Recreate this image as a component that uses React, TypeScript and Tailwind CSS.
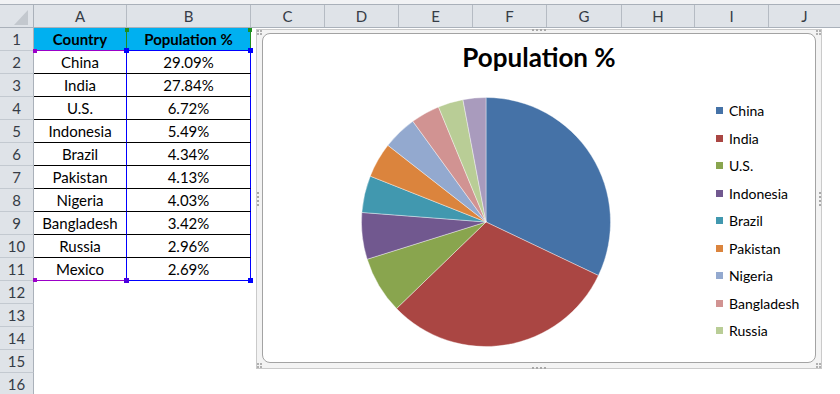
const rows: [string, string][] = [
  ["China", "29.09%"],
  ["India", "27.84%"],
  ["U.S.", "6.72%"],
  ["Indonesia", "5.49%"],
  ["Brazil", "4.34%"],
  ["Pakistan", "4.13%"],
  ["Nigeria", "4.03%"],
  ["Bangladesh", "3.42%"],
  ["Russia", "2.96%"],
  ["Mexico", "2.69%"],
];

const colors = [
  "#4572a7",
  "#aa4643",
  "#89a54e",
  "#71588f",
  "#4198af",
  "#db843d",
  "#93a9cf",
  "#d19392",
  "#b9cd96",
  "#a99bbd",
];

const cols = [
  { label: "A", w: "w-[93px] border-r" },
  { label: "B", w: "w-[124px] border-r" },
  { label: "C", w: "w-[74px] border-r" },
  { label: "D", w: "w-[74px] border-r" },
  { label: "E", w: "w-[74px] border-r" },
  { label: "F", w: "w-[74px] border-r" },
  { label: "G", w: "w-[75px] border-r" },
  { label: "H", w: "w-[73px] border-r" },
  { label: "I", w: "w-[74px] border-r" },
  { label: "J", w: "flex-1" },
];

function cellStyle(r: number, col: "A" | "B") {
  if (r === 1)
    return col === "A"
      ? "bg-[#00b0f0] font-bold border-r border-b border-r-[#1f8f1f] border-b-[#9b00c8]"
      : "bg-[#00b0f0] font-bold border-r border-b border-r-[#1f8f1f] border-b-[#0000ff]";
  if (r >= 2 && r <= 10) return "border-r border-b border-r-[#0000ff] border-b-black";
  if (r === 11)
    return col === "A"
      ? "border-r border-b border-r-[#0000ff] border-b-[#9b00c8]"
      : "border-r border-b border-[#0000ff]";
  return "";
}

function cellText(r: number, col: "A" | "B") {
  if (r === 1) return col === "A" ? "Country" : "Population %";
  if (r <= 11) return rows[r - 2][col === "A" ? 0 : 1];
  return "";
}

function Pie() {
  const total = rows.reduce((s, [, v]) => s + parseFloat(v), 0);
  const c = 125;
  const rad = 124.5;
  let a = 0;
  const pt = (deg: number) => {
    const t = (deg * Math.PI) / 180;
    return `${c + rad * Math.sin(t)} ${c - rad * Math.cos(t)}`;
  };
  return (
    <svg width="250" height="250" viewBox="0 0 250 250" className="shrink-0">
      {rows.map(([name, v], i) => {
        const start = a;
        const sweep = (parseFloat(v) / total) * 360;
        a += sweep;
        const large = sweep > 180 ? 1 : 0;
        return (
          <path
            key={name}
            d={`M ${c} ${c} L ${pt(start)} A ${rad} ${rad} 0 ${large} 1 ${pt(a)} Z`}
            fill={colors[i]}
            stroke="#ffffff"
            strokeWidth="0.4"
          />
        );
      })}
    </svg>
  );
}

// little grip dots on the chart frame
function Dots({ vertical = false }: { vertical?: boolean }) {
  return (
    <div className={vertical ? "flex flex-col gap-[2px]" : "flex gap-[2px]"}>
      {[0, 1, 2, 3].map((i) => (
        <span key={i} className="block h-[2px] w-[2px] bg-[#a8a8a8]" />
      ))}
    </div>
  );
}

function Corner() {
  return (
    <div className="grid grid-cols-2 gap-[1px]">
      {[0, 1, 2, 3].map((i) => (
        <span key={i} className="block h-[2px] w-[2px] bg-[#b0b0b0]" />
      ))}
    </div>
  );
}

function Chart() {
  return (
    <div className="absolute left-[256px] top-[29px] h-[340px] w-[566px] border border-[#cacaca] bg-[#f3f3f3] pb-[5px] pl-[5px] pr-[5px] pt-[3px]">
      <div className="absolute inset-0 flex flex-col justify-between">
        <div className="flex items-start justify-between">
          <Corner />
          <div className="-mt-px">
            <Dots />
          </div>
          <Corner />
        </div>
        <div className="flex items-center justify-between">
          <Dots vertical />
          <Dots vertical />
        </div>
        <div className="flex items-end justify-between">
          <Corner />
          <div className="-mb-px">
            <Dots />
          </div>
          <Corner />
        </div>
      </div>

      <div className="relative flex h-full w-full flex-col rounded-[8px] border border-[#a3a3a3] bg-white">
        <div className="flex h-[63px] justify-center pt-[8px] text-[26px] font-bold leading-[30px] text-black">
          Population %
        </div>
        <div className="flex">
          <div className="ml-[98px]">
            <Pie />
          </div>
          <div className="ml-[105px] flex flex-col">
            {rows.slice(0, 9).map(([name], i) => (
              <div key={name} className="flex h-[27.5px] items-center gap-[6px] text-[14px] text-black">
                <span className="block h-[7px] w-[7px]" style={{ backgroundColor: colors[i] }} />
                {name}
              </div>
            ))}
          </div>
        </div>
      </div>
    </div>
  );
}

export default function App() {
  return (
    <div className="relative h-[394px] w-[840px] overflow-hidden bg-white font-[family-name:Lato,sans-serif]">
      <div className="h-[5px] border-b border-[#a9b0b9] bg-[#f1f2f4]" />
      <div className="flex h-[23px] border-b border-[#aab1ba] bg-[#dfe3e8] text-[15px] text-[#363c46]">
        <div className="w-[34px] shrink-0 border-r border-[#aab1ba]">
          <svg width="33" height="22" viewBox="0 0 33 22">
            <polygon points="28,5 28,20 14,20" fill="#c3c8ce" />
          </svg>
        </div>
        {cols.map((c) => (
          <div key={c.label} className={`${c.w} flex shrink-0 items-center justify-center border-[#b5bbc3]`}>
            {c.label}
          </div>
        ))}
      </div>

      {Array.from({ length: 16 }, (_, i) => i + 1).map((r) => (
        <div key={r} className="flex h-[23px] text-[15px] text-black">
          <div className="flex w-[34px] shrink-0 items-center justify-center border-b border-r border-b-[#c3c9d0] border-r-[#aab1ba] bg-[#dfe3e8] text-[#363c46]">
            {r}
          </div>
          <div className={`flex w-[93px] shrink-0 items-center justify-center ${cellStyle(r, "A")}`}>
            {cellText(r, "A")}
          </div>
          <div className={`flex w-[124px] shrink-0 items-center justify-center ${cellStyle(r, "B")}`}>
            {cellText(r, "B")}
          </div>
          <div className="flex-1" />
        </div>
      ))}

      {/* range highlight handles */}
      <span className="absolute left-[125px] top-[28px] h-[4px] w-[4px] bg-[#1f8f1f]" />
      <span className="absolute left-[248px] top-[28px] h-[4px] w-[4px] bg-[#1f8f1f]" />
      <span className="absolute left-[33px] top-[49px] h-[4px] w-[4px] bg-[#9b00c8]" />
      <span className="absolute left-[33px] top-[278px] h-[4px] w-[4px] bg-[#9b00c8]" />
      <span className="absolute left-[124px] top-[48px] h-[5px] w-[5px] bg-[#0000ff]" />
      <span className="absolute left-[248px] top-[48px] h-[5px] w-[5px] bg-[#0000ff]" />
      <span className="absolute left-[124px] top-[278px] h-[5px] w-[5px] bg-[#4b00e0]" />
      <span className="absolute left-[248px] top-[278px] h-[5px] w-[5px] bg-[#0000ff]" />

      <Chart />
    </div>
  );
}
